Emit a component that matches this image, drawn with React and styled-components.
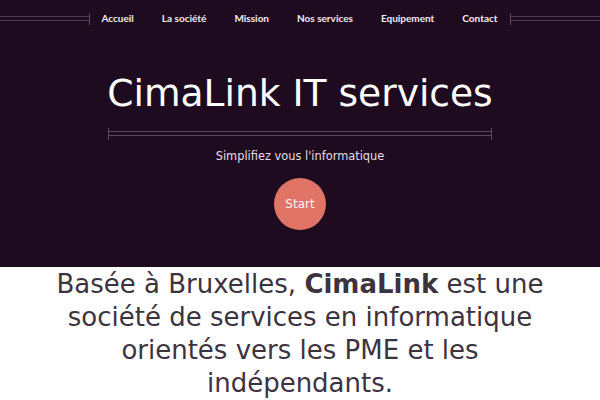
import styled, { createGlobalStyle } from "styled-components";

const GlobalStyle = createGlobalStyle`
  html, body {
    margin: 0;
    padding: 0;
    background: #ffffff;
  }
  body {
    font-family: "DejaVu Sans", sans-serif;
  }
`;

const Hero = styled.header`
  background-color: #1e0b1f;
  height: 267px;
  display: flex;
  flex-direction: column;
  align-items: center;
`;

const Nav = styled.nav`
  width: 100%;
  height: 36px;
  display: flex;
  align-items: center;
`;

const NavLine = styled.div`
  flex: 1;
  height: 3px;
  border-top: 1px solid #4a3a4c;
  border-bottom: 1px solid #4a3a4c;
  position: relative;
  margin-top: 1px;

  &::after {
    content: "";
    position: absolute;
    top: -4px;
    ${(p) => (p.$side === "left" ? "right: 0;" : "left: 0;")}
    width: 1px;
    height: 12px;
    background: #5a4a5c;
  }
`;

const NavList = styled.ul`
  list-style: none;
  margin: 0;
  padding: 0 12px 0 11px;
  display: flex;
  gap: 28px;
`;

const NavItem = styled.li`
  font-family: Lato, "Open Sans", sans-serif;
  font-weight: 700;
  font-size: 10px;
  color: #f2ecf2;
`;

const Title = styled.h1`
  margin: 34px 0 0;
  font-family: "DejaVu Sans", sans-serif;
  font-weight: 400;
  font-size: 37.6px;
  line-height: 46px;
  color: #ffffff;
`;

const Divider = styled.div`
  width: 384px;
  height: 3px;
  margin-top: 15px;
  border-top: 1px solid #5a4a5c;
  border-bottom: 1px solid #5a4a5c;
  position: relative;

  &::before,
  &::after {
    content: "";
    position: absolute;
    top: -4px;
    width: 1px;
    height: 12px;
    background: #5a4a5c;
  }
  &::before {
    left: 0;
  }
  &::after {
    right: 0;
  }
`;

const Tagline = styled.p`
  margin: 12px 0 0;
  font-size: 11.4px;
  line-height: 16px;
  color: #e6dfe6;
`;

const StartButton = styled.button`
  margin-top: 14px;
  width: 52px;
  height: 52px;
  border-radius: 50%;
  border: none;
  background-color: #e07466;
  color: #fff3f0;
  font-family: "DejaVu Sans", sans-serif;
  font-size: 12px;
  cursor: pointer;
  padding: 0;
`;

const Intro = styled.section`
  padding: 1px 50px 0;
  text-align: center;
`;

const IntroText = styled.p`
  margin: 0;
  font-size: 26px;
  line-height: 33px;
  color: #3d3340;

  strong {
    font-weight: 700;
  }
`;

export default function App() {
  const links = ["Accueil", "La société", "Mission", "Nos services", "Equipement", "Contact"];
  return (
    <>
      <GlobalStyle />
      <Hero>
        <Nav>
          <NavLine $side="left" />
          <NavList>
            {links.map((l) => (
              <NavItem key={l}>{l}</NavItem>
            ))}
          </NavList>
          <NavLine $side="right" />
        </Nav>
        <Title>CimaLink IT services</Title>
        <Divider />
        <Tagline>Simplifiez vous l'informatique</Tagline>
        <StartButton>Start</StartButton>
      </Hero>
      <Intro>
        <IntroText>
          Basée à Bruxelles, <strong>CimaLink</strong> est une société de services en
          informatique orientés vers les PME et les indépendants.
        </IntroText>
      </Intro>
    </>
  );
}
